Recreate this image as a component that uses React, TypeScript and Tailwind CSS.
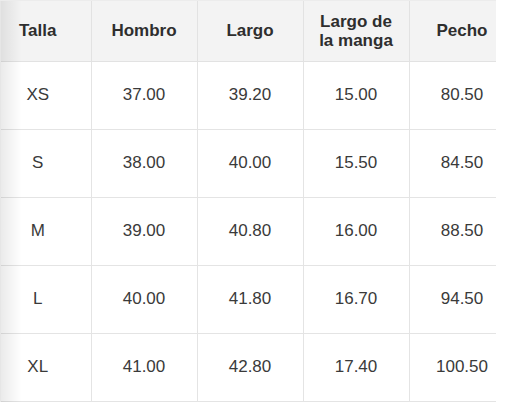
const headers = ['Talla', 'Hombro', 'Largo', 'Largo de la manga', 'Pecho']

const rows = [
  ['XS', '37.00', '39.20', '15.00', '80.50'],
  ['S', '38.00', '40.00', '15.50', '84.50'],
  ['M', '39.00', '40.80', '16.00', '88.50'],
  ['L', '40.00', '41.80', '16.70', '94.50'],
  ['XL', '41.00', '42.80', '17.40', '100.50'],
]

export default function App() {
  return (
    <div className="h-[402px] w-[508px] bg-white font-['Liberation_Sans',Arial,sans-serif]">
      <div className="relative w-[496px] overflow-hidden border-t border-[#ececec]">
        <table className="-ml-[15px] w-[530px] table-fixed border-collapse text-[17px] text-[#3a3a3a]">
          <thead>
            <tr className="h-[60px] bg-[#f3f3f3]">
              {headers.map((h) => (
                <th
                  key={h}
                  className="w-[106px] border-r border-b border-[#e2e2e2] px-2 text-center text-[17px] font-bold leading-[19px] text-[#2e2e2e]"
                >
                  {h === 'Largo de la manga' ? (
                    <>
                      Largo de
                      <br />
                      la manga
                    </>
                  ) : (
                    h
                  )}
                </th>
              ))}
            </tr>
          </thead>
          <tbody>
            {rows.map((r) => (
              <tr key={r[0]} className="h-[68px]">
                {r.map((c, i) => (
                  <td key={i} className="border-r border-b border-[#e4e4e4] text-center">
                    {c}
                  </td>
                ))}
              </tr>
            ))}
          </tbody>
        </table>
        {/* shadow of the scrolled first column */}
        <div className="pointer-events-none absolute inset-y-0 left-0 w-[22px] border-l border-[#e6e6e6] bg-gradient-to-r from-black/[0.08] to-transparent" />
      </div>
    </div>
  )
}
